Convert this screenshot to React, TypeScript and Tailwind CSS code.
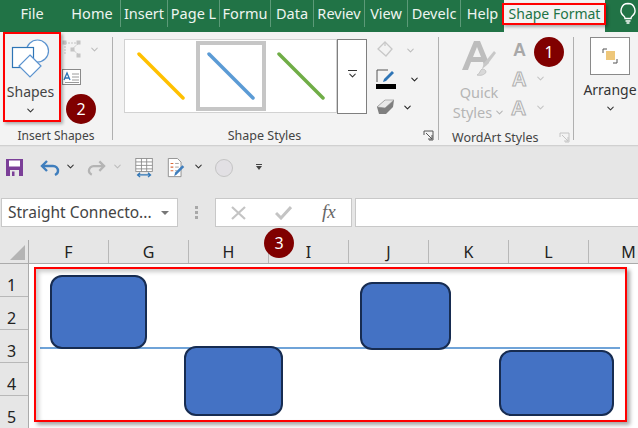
import { ChevronDown } from "lucide-react";

const tabs = [
  { label: "File", w: "w-[64px]", sep: false },
  { label: "Home", w: "w-[57px]", sep: true },
  { label: "Insert", w: "w-[47px]", sep: true },
  { label: "Page L", w: "w-[52px]", sep: true },
  { label: "Formu", w: "w-[51px]", sep: true },
  { label: "Data", w: "w-[43px]", sep: true },
  { label: "Reviev", w: "w-[51px]", sep: true },
  { label: "View", w: "w-[43px]", sep: true },
  { label: "Develc", w: "w-[53px]", sep: true },
  { label: "Help", w: "w-[43px]", sep: false },
];

const columns = ["F", "G", "H", "I", "J", "K", "L", "M"];
const rows = ["1", "2", "3", "4", "5"];

const sheetShapes = [
  "left-[21px] top-[11px] w-[97px] h-[74px]",
  "left-[155px] top-[82px] w-[99px] h-[70px]",
  "left-[331px] top-[18px] w-[91px] h-[68px]",
  "left-[470px] top-[86px] w-[115px] h-[66px]",
];

function Chev({ className = "text-[#444]" }: { className?: string }) {
  return <ChevronDown size={11} strokeWidth={2.2} className={className} />;
}

function StyleLine({ color }: { color: string }) {
  return (
    <svg width="48" height="48" viewBox="0 0 48 48">
      <line x1="2" y1="2" x2="46" y2="46" stroke={color} strokeWidth="3.5" strokeLinecap="round" />
    </svg>
  );
}

function Launcher({ color }: { color: string }) {
  return (
    <svg width="11" height="11" viewBox="0 0 11 11" fill="none" stroke={color} strokeWidth="1">
      <path d="M1 5V1h9v9H6" />
      <path d="M3 3l6 6M9 5v4H5" />
    </svg>
  );
}

function Badge({ n, className }: { n: string; className: string }) {
  return (
    <div className={"absolute w-[30px] h-[30px] rounded-full bg-[#800000] text-white text-[16px] flex items-center justify-center " + className}>
      {n}
    </div>
  );
}

export default function App() {
  return (
    <div className="relative w-[638px] h-[428px] overflow-hidden bg-[#e6e6e6] text-[#333] font-['Noto_Sans',sans-serif]">
      {/* Tabs */}
      <div className="flex h-[32px] bg-[#217346] text-white text-[14.5px]">
        {tabs.map((t) => (
          <div key={t.label} className={t.w + " h-[27px] flex items-center justify-center whitespace-nowrap overflow-hidden text-[#eef5f0] " + (t.sep ? "border-r border-[#5c9a78]" : "")}>
            {t.label}
          </div>
        ))}
        <div className="w-[101px] bg-[#f3f3f3] text-[#217346] flex items-start justify-center pt-[3px] text-[14px] whitespace-nowrap">
          Shape Format
        </div>
        <div className="flex-1 flex items-start justify-end pr-[1px] pt-[2px]">
          <svg width="18" height="22" viewBox="0 0 18 22" fill="none" stroke="#fff" strokeWidth="1.4">
            <path d="M9 1.5a7 7 0 0 0-4 12.7c.7.6 1 1.4 1 2.3h6c0-.9.3-1.7 1-2.3A7 7 0 0 0 9 1.5z" />
            <path d="M6.5 19h5M7.5 21h3" />
          </svg>
        </div>
      </div>

      {/* Ribbon */}
      <div className="flex h-[114px] bg-[#f3f3f3] border-b border-[#d0d0d0] text-[#444]">
        <div className="w-[113px] h-[103px] border-r border-[#b0b0b0] flex flex-col mt-[5px]">
          <div className="flex flex-1">
            <div className="w-[60px] flex flex-col items-center pl-[1px]">
              <svg width="40" height="40" viewBox="0 0 40 40" fill="none" strokeWidth="1.2" className="mt-[2px]">
                <circle cx="26.5" cy="12" r="11" stroke="#5b93cf" fill="#fff" />
                <rect x="1.5" y="8.5" width="21" height="20" stroke="#2e75b6" fill="#fff" />
                <path d="M19 16l11 11-11 11L8 27z" stroke="#5b93cf" fill="#fff" />
              </svg>
              <div className="text-[14px] leading-[20px] mt-[3px]">Shapes</div>
              <Chev className="text-[#333] mt-[3px]" />
            </div>
            <div className="flex flex-col pt-[3px] pl-[2px]">
              <div className="flex items-center gap-[7px]">
                <svg width="20" height="18" viewBox="0 0 20 18" fill="none" stroke="#c4c4c4" strokeWidth="1">
                  <path d="M3 3h14M3 3l0 12M10 9l7-6M10 9l7 6" strokeDasharray="2 1" />
                  <rect x="1" y="1" width="3" height="3" fill="#c4c4c4" />
                  <rect x="15" y="1" width="3" height="3" fill="#c4c4c4" />
                  <rect x="9" y="8" width="3" height="3" fill="#c4c4c4" />
                  <rect x="15" y="14" width="3" height="3" fill="#c4c4c4" />
                </svg>
                <Chev className="text-[#bcbcbc]" />
              </div>
              <svg width="19" height="17" viewBox="0 0 19 17" fill="#fff" className="mt-[11px]">
                <rect x=".5" y=".5" width="18" height="15" stroke="#8a8a8a" />
                <path d="M2 11l3-7 3 7M3.2 9h3.6" stroke="#2e75b6" strokeWidth="1.3" fill="none" />
                <path d="M10 5h7M10 8h7M10 11h7M3 13.5h14" stroke="#9a9a9a" />
              </svg>
            </div>
          </div>
          <div className="h-[20px] pt-[8px] text-center text-[12px] leading-[16px] whitespace-nowrap">Insert Shapes</div>
        </div>

        <div className="w-[326px] h-[103px] border-r border-[#b0b0b0] flex flex-col mt-[5px]">
          <div className="flex flex-1 pl-[11px] pt-[2px]">
            <div className="w-[213px] h-[74px] bg-white border border-[#d2d2d2] flex items-center">
              <div className="w-[71px] flex justify-center"><StyleLine color="#ffc000" /></div>
              <div className="w-[70px] h-[70px] border-[4px] border-[#c6c6c6] flex items-center justify-center"><StyleLine color="#5b9bd5" /></div>
              <div className="flex-1 flex justify-center"><StyleLine color="#70ad47" /></div>
            </div>
            <div className="w-[30px] h-[75px] border border-[#7f7f7f] bg-white flex flex-col items-center pt-[30px]">
              <div className="w-[9px] h-[1px] bg-[#333]" />
              <Chev className="text-[#333] -mt-[1px]" />
            </div>
            <div className="flex flex-col pl-[9px] gap-[7px]">
              <div className="flex items-center gap-[11px] h-[22px]">
                <svg width="18" height="20" viewBox="0 0 18 20" fill="#f3f3f3" stroke="#c8c8c8" strokeWidth="1.3">
                  <path d="M9 2l7 7-6 7-8-7z" />
                  <path d="M9 2v4" />
                </svg>
                <Chev className="text-[#bcbcbc]" />
              </div>
              <div className="flex items-center gap-[13px] h-[22px]">
                <div className="w-[20px] h-[20px]">
                  <svg width="20" height="15" viewBox="0 0 20 15" fill="none">
                    <path d="M1 13V1h11" stroke="#555" strokeWidth="1" />
                    <path d="M7 13l1-3 8-8 2 2-8 8z" fill="#2e75b6" />
                  </svg>
                  <div className="w-[20px] h-[5px] bg-black" />
                </div>
                <Chev className="text-[#222]" />
              </div>
              <div className="flex items-center gap-[6px] h-[20px]">
                <svg width="20" height="18" viewBox="0 0 20 18">
                  <path d="M1 9l8-7h9l-1 7-7 7H3z" fill="#7f7f7f" />
                  <path d="M1 9l8-7h9L9 10z" fill="#e8e8e8" stroke="#8a8a8a" strokeWidth=".6" />
                </svg>
                <Chev className="text-[#222]" />
              </div>
            </div>
          </div>
          <div className="relative h-[20px] pt-[8px] text-center text-[12.5px] leading-[16px] pr-[22px]">
            Shape Styles
            <div className="absolute right-[4px] top-[10px]"><Launcher color="#555" /></div>
          </div>
        </div>

        <div className="w-[135px] h-[103px] border-r border-[#b0b0b0] flex flex-col mt-[5px]">
          <div className="flex flex-1 pl-[11px]">
            <div className="w-[58px] flex flex-col items-center text-[#b5b5b5] text-[14.5px] leading-[20px]">
              <svg width="38" height="38" viewBox="0 0 38 38" className="mt-[2px]">
                <path d="M2 31L14 2h6l9 22-5 3-1-4H11l-3 8zM13 18h8l-4-10z" fill="#bdbdbd" fillRule="evenodd" />
                <path d="M22 30l2-6 10-12 2 2-9 12z" fill="#c8c8c8" />
                <path d="M17 36c3-1 3-5 5-6 2 0 4 1 4 3-1 3-6 4-9 3z" fill="#d8d8d8" stroke="#bdbdbd" strokeWidth=".8" />
              </svg>
              <div className="mt-[5px]">Quick</div>
              <div className="flex items-center gap-[2px]">Styles<Chev className="text-[#b5b5b5]" /></div>
            </div>
            <div className="flex flex-col text-[#b8b8b8] pl-[2px] font-['Liberation_Sans',sans-serif] font-bold">
              <div className="h-[27px] text-[18px] leading-[27px] pl-[3px] text-[#a8a8a8]">A</div>
              <div className="h-[29px] flex items-center gap-[9px] text-[20px]">
                <span className="[-webkit-text-stroke:1px_#b0b0b0] text-[#f3f3f3] pl-[2px]">A</span>
                <Chev className="text-[#c4c4c4]" />
              </div>
              <div className="h-[29px] flex items-center gap-[9px] text-[21px]">
                <span className="[-webkit-text-stroke:1px_#b0b0b0] text-[#f3f3f3] pl-[1px]">A</span>
                <Chev className="text-[#c4c4c4]" />
              </div>
            </div>
          </div>
          <div className="relative h-[20px] pt-[8px] text-[12.5px] leading-[16px] pl-[13px]">
            WordArt Styles
            <div className="absolute right-[3px] top-[10px]"><Launcher color="#c4c4c4" /></div>
          </div>
        </div>

        <div className="flex-1 flex flex-col items-center pt-[5px] pl-[8px]">
          <div className="w-[40px] h-[38px] bg-white border border-[#8a8a8a] flex items-center justify-center">
            <svg width="16" height="16" viewBox="0 0 16 16" fill="none">
              <rect x="4" y="3" width="9" height="9" fill="#eec77a" />
              <path d="M5 1H1v4M11 15h4v-4" stroke="#555" strokeWidth="1" />
            </svg>
          </div>
          <div className="text-[14px] leading-[20px] mt-[5px] text-[#333]">Arrange</div>
          <Chev className="text-[#333] mt-[3px]" />
        </div>
      </div>

      {/* Quick access toolbar */}
      <div className="flex items-center h-[39px] pl-[6px] border-t border-[#e0e0e0]">
        <svg width="17" height="17" viewBox="0 0 17 17" className="mt-[3px]">
          <path d="M0 0h17v17H0z" fill="#7b3f98" />
          <rect x="3" y="1.5" width="11" height="6" fill="#fff" />
          <rect x="4" y="11" width="9" height="6" fill="#e6e6e6" />
          <rect x="6" y="12.5" width="2.5" height="4.5" fill="#7b3f98" />
        </svg>
        <svg width="20" height="18" viewBox="0 0 20 18" fill="none" stroke="#3f7ebd" strokeWidth="2.4" className="ml-[17px] mt-[3px]">
          <path d="M7 2L2 7l5 5" />
          <path d="M2 7h11a5 5 0 0 1 5 5c0 2-1 3-3 4" />
        </svg>
        <Chev className="ml-[5px] text-[#333]" />
        <svg width="19" height="18" viewBox="0 0 20 18" fill="none" stroke="#b4b4b4" strokeWidth="2.4" className="ml-[11px] mt-[3px]">
          <path d="M13 2l5 5-5 5" />
          <path d="M18 7H7a5 5 0 0 0-5 5c0 2 1 3 3 4" />
        </svg>
        <Chev className="ml-[6px] text-[#bcbcbc]" />
        <svg width="21" height="20" viewBox="0 0 21 23" fill="#fff" stroke="#8a8a8a" strokeWidth="1" className="ml-[11px] mt-[3px]">
          <rect x=".5" y=".5" width="19" height="15" />
          <path d="M.5 4.5h19M.5 8.5h19M.5 12.5h19M7 .5v15M13 .5v15" />
          <path d="M3 19.5h14M5.5 17l-3 2.5 3 2.5M14.5 17l3 2.5-3 2.5" stroke="#2e75b6" strokeWidth="1.4" fill="none" />
        </svg>
        <svg width="19" height="20" viewBox="0 0 19 22" fill="#fff" className="ml-[12px] mt-[3px]">
          <path d="M.5.5h10l4 4v16H.5z" stroke="#8a8a8a" />
          <path d="M3 6h3M3 10h3M3 14h3" stroke="#d9693a" strokeWidth="1.2" />
          <path d="M8 6h4M8 10h4M8 14h2" stroke="#9a9a9a" />
          <path d="M7 20l1-4 8-8 2 2-8 8z" fill="#3f7ebd" />
        </svg>
        <Chev className="ml-[7px] text-[#333]" />
        <div className="ml-[11px] mt-[3px] w-[18px] h-[18px] rounded-full bg-[#e2e0e4] border border-[#c4c4c4]" />
        <div className="ml-[23px] mt-[2px] flex flex-col items-center">
          <div className="w-[6px] h-[1px] bg-[#444] mb-[1px]" />
          <div className="w-0 h-0 border-x-[3px] border-x-transparent border-t-[4px] border-t-[#444]" />
        </div>
      </div>

      {/* Formula bar */}
      <div className="flex items-center h-[29px] mt-[13px] pl-[1px]">
        <div className="w-[177px] h-[29px] bg-white border border-[#c8c8c8] flex items-center pl-[6px] text-[15.5px] text-[#444]">
          <span className="flex-1 whitespace-nowrap">Straight Connecto...</span>
          <div className="w-0 h-0 border-x-[4px] border-x-transparent border-t-[4px] border-t-[#777] mr-[8px]" />
        </div>
        <div className="w-[37px] flex flex-col items-center gap-[2px]">
          <div className="w-[3px] h-[3px] bg-[#a8a8a8]" />
          <div className="w-[3px] h-[3px] bg-[#a8a8a8]" />
          <div className="w-[3px] h-[3px] bg-[#a8a8a8]" />
        </div>
        <div className="w-[137px] h-[29px] bg-white border border-[#c8c8c8] flex items-center pl-[15px]">
          <svg width="15" height="14" viewBox="0 0 15 14" fill="none" stroke="#c4c4c4" strokeWidth="2.2">
            <path d="M1 1l13 12M14 1L1 13" />
          </svg>
          <svg width="17" height="14" viewBox="0 0 17 14" fill="none" stroke="#c4c4c4" strokeWidth="3" className="ml-[29px]">
            <path d="M1 7l5 5L16 1" />
          </svg>
          <span className="ml-[30px] font-['Liberation_Serif',serif] italic text-[19px] text-[#666]">fx</span>
        </div>
        <div className="flex-1 h-[29px] ml-[3px] bg-white border-y border-l border-[#c8c8c8]" />
      </div>

      {/* Column headers */}
      <div className="flex h-[24px] mt-[13px] border-b border-[#ababab] text-[16px] text-[#222]">
        <div className="w-[29px] shrink-0 border-r border-[#ababab] flex items-end justify-end pr-[3px] pb-[3px]">
          <div className="w-0 h-0 border-l-[15px] border-l-transparent border-b-[15px] border-b-[#b4b4b4]" />
        </div>
        {columns.map((c) => (
          <div key={c} className="w-[80px] shrink-0 border-r border-[#b8b8b8] flex items-center justify-center">
            {c}
          </div>
        ))}
      </div>

      {/* Sheet */}
      <div className="flex">
        <div className="w-[29px] shrink-0 border-r border-[#ababab] text-[16px] leading-[20px] text-[#222]">
          {rows.map((r) => (
            <div key={r} className="h-[33px] border-b border-[#b8b8b8] flex items-end justify-center pr-[5px] pb-[1px]">
              {r}
            </div>
          ))}
        </div>
        <div className="relative flex-1 bg-white h-[165px]">
          <div className="absolute left-[11px] right-[18px] top-[83px] h-[2px] bg-[#6fa3d8]" />
          {sheetShapes.map((s) => (
            <div key={s} className={"absolute bg-[#4472c4] border-2 border-[#172c51] rounded-[12px] " + s} />
          ))}
        </div>
      </div>

      {/* Annotations */}
      <div className="absolute left-[502px] top-[3px] w-[104px] h-[22px] border-2 border-[#ff0000] shadow-[2px_2px_3px_rgba(0,0,0,0.3)]" />
      <div className="absolute left-[3px] top-[32px] w-[58px] h-[90px] border-2 border-[#ff0000] shadow-[2px_2px_3px_rgba(0,0,0,0.3)]" />
      <div className="absolute left-[34px] top-[267px] w-[593px] h-[155px] border-2 border-[#ff0000] shadow-[3px_3px_4px_rgba(0,0,0,0.35),inset_3px_3px_4px_rgba(0,0,0,0.2)]" />
      <Badge n="1" className="left-[534px] top-[37px]" />
      <Badge n="2" className="left-[66px] top-[94px]" />
      <Badge n="3" className="left-[264px] top-[228px]" />
    </div>
  );
}
